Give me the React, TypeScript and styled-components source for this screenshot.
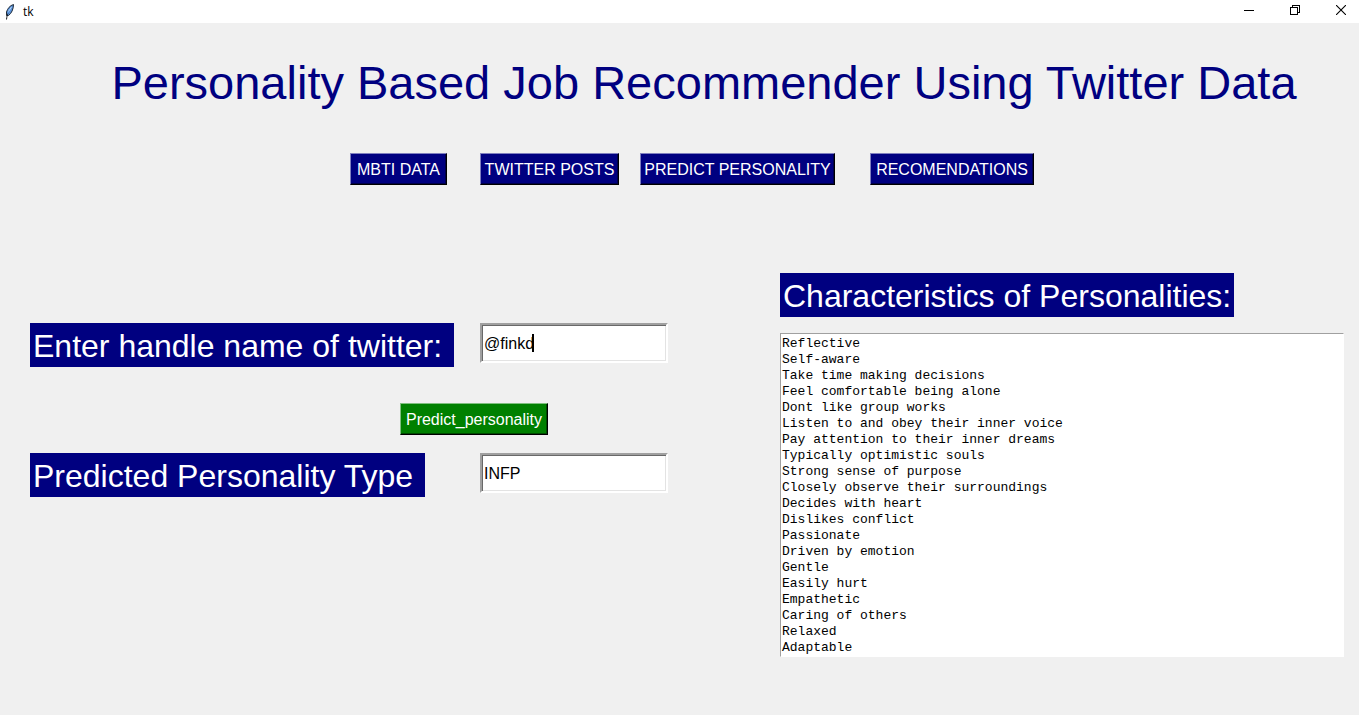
import React, { useState } from "react";
import styled, { createGlobalStyle } from "styled-components";

const GlobalStyle = createGlobalStyle`
  * { box-sizing: border-box; }
  body {
    margin: 0;
    background: #f0f0f0;
    font-family: "Liberation Sans", Arial, sans-serif;
  }
`;

const Window = styled.div`
  min-height: 100vh;
  background: #f0f0f0;
`;

const TitleBar = styled.header`
  display: flex;
  align-items: center;
  height: 23px;
  padding-left: 3px;
  background: #fff;
`;

const Caption = styled.span`
  flex: 1;
  padding-left: 6px;
  font: 12px/22px "Open Sans", sans-serif;
  color: #000;
`;

const WindowButton = styled.button`
  display: flex;
  align-items: center;
  justify-content: center;
  width: 46px;
  height: 20px;
  padding: 0;
  border: 0;
  background: transparent;
  &:last-child { margin-right: -5px; }
`;

const WindowControls = styled.div`
  display: flex;
  align-self: flex-start;
  overflow: hidden;
`;

const Heading = styled.h1`
  margin: 0;
  padding: 33px 0 0 49px;
  font-size: 47px;
  font-weight: 400;
  line-height: 54px;
  text-align: center;
  white-space: nowrap;
  color: #000080;
`;

const Nav = styled.nav`
  display: flex;
  padding: 43px 0 0 350px;
`;

const RaisedButton = styled.button<{ $width: number; $tone?: "navy" | "green"; $gap?: number }>`
  width: ${(p) => p.$width}px;
  height: 32px;
  margin: 0 ${(p) => p.$gap ?? 0}px 0 0;
  padding: 2px 0 0;
  border: 1px solid;
  border-color: ${(p) =>
    p.$tone === "green" ? "#7fbf7f #000 #000 #7fbf7f" : "#7f7fbf #000 #000 #7f7fbf"};
  box-shadow: inset -1px -1px ${(p) => (p.$tone === "green" ? "#004b00" : "#00004b")};
  background: ${(p) => (p.$tone === "green" ? "#008000" : "#000080")};
  color: #fff;
  font: 16px/18px "Liberation Sans", Arial, sans-serif;
  white-space: nowrap;
`;

const Content = styled.main`
  display: grid;
  grid-template-columns: 750px 1fr;
  padding: 88px 15px 0 30px;
`;

const Form = styled.form`
  display: grid;
  grid-template-columns: 450px 188px;
  align-content: start;
  align-items: start;
  padding-top: 50px;
`;

const Action = styled.div`
  grid-column: 1 / -1;
  padding: 36px 0 18px 370px;
`;

const bannerStyle = `
  justify-self: start;
  display: block;
  width: max-content;
  margin: 0;
  padding: 4px 3px 2px;
  background: #000080;
  color: #fff;
  font-size: 32px;
  font-weight: 400;
  line-height: 38px;
  white-space: pre;
`;

const FieldLabel = styled.label`${bannerStyle}`;
const PanelHeading = styled.label`${bannerStyle}`;

const Field = styled.div`
  position: relative;
  height: 40px;
`;

const TextBox = styled.input`
  display: block;
  width: 100%;
  height: 40px;
  padding: 2px 2px 0;
  border: 2px solid;
  border-color: #a0a0a0 #fff #fff #a0a0a0;
  border-radius: 0;
  box-shadow: inset 1px 1px #696969, inset -1px -1px #e3e3e3;
  outline: 0;
  background: #fff;
  color: #000;
  font: 16px/18px "Liberation Sans", Arial, sans-serif;
`;

const Caret = styled.span`
  position: absolute;
  top: 11px;
  left: 52px;
  width: 2px;
  height: 18px;
  background: #000;
`;

const Traits = styled.textarea`
  display: block;
  width: 100%;
  height: 324px;
  margin-top: 16px;
  padding: 2px 1px 0;
  border: 1px solid;
  border-color: #a0a0a0 #fff #fff #a0a0a0;
  border-radius: 0;
  outline: 0;
  overflow: hidden;
  resize: none;
  background: #fff;
  color: #000;
  font: 13px/16px "Liberation Mono", "Courier New", monospace;
`;

const traits = [
  "Reflective",
  "Self-aware",
  "Take time making decisions",
  "Feel comfortable being alone",
  "Dont like group works",
  "Listen to and obey their inner voice",
  "Pay attention to their inner dreams",
  "Typically optimistic souls",
  "Strong sense of purpose",
  "Closely observe their surroundings",
  "Decides with heart",
  "Dislikes conflict",
  "Passionate",
  "Driven by emotion",
  "Gentle",
  "Easily hurt",
  "Empathetic",
  "Caring of others",
  "Relaxed",
  "Adaptable",
];

const FeatherIcon = () => (
  <svg width="14" height="18" viewBox="0 0 14 18" aria-hidden="true">
    <path
      d="M10.5 1.5C7 2.5 4.500 5.500 3.500 9L3.500 12.500L5.500 12.500C8.500 10.500 10.500 6 10.500 1.500Z"
      fill="#5b94dc"
      stroke="#222c38"
      strokeWidth="1"
    />
    <path d="M5 10.500C4.200 12 3.800 14 3.500 16.500" fill="none" stroke="#15191e" strokeWidth="1" />
    <path d="M8.500 4L5.500 8.500" stroke="#b9d7f7" strokeWidth="1" />
  </svg>
);

export default function App() {
  const [handle, setHandle] = useState("@finkd");
  return (
    <Window>
      <GlobalStyle />
      <TitleBar>
        <FeatherIcon />
        <Caption>tk</Caption>
        <WindowControls>
          <WindowButton aria-label="Minimize">
            <svg width="10" height="10" shapeRendering="crispEdges">
              <path d="M0 5.500H10" stroke="#000" />
            </svg>
          </WindowButton>
          <WindowButton aria-label="Restore">
            <svg width="10" height="10" fill="none" stroke="#000" shapeRendering="crispEdges">
              <path d="M0.500 2.500H7.500V9.500H0.500ZM2.500 2.500V0.500H9.500V7.500H7.500" />
            </svg>
          </WindowButton>
          <WindowButton aria-label="Close">
            <svg width="10" height="10" fill="none" stroke="#000" strokeWidth="1.1">
              <path d="M0 0L10 10M10 0L0 10" />
            </svg>
          </WindowButton>
        </WindowControls>
      </TitleBar>
      <Heading>Personality Based Job Recommender Using Twitter Data</Heading>
      <Nav>
        <RaisedButton $width={97} $gap={33}>MBTI DATA</RaisedButton>
        <RaisedButton $width={139} $gap={21}>TWITTER POSTS</RaisedButton>
        <RaisedButton $width={195} $gap={35}>PREDICT PERSONALITY</RaisedButton>
        <RaisedButton $width={164}>RECOMENDATIONS</RaisedButton>
      </Nav>
      <Content>
        <Form onSubmit={(e) => e.preventDefault()}>
          <FieldLabel htmlFor="handle">{"Enter handle name of twitter: "}</FieldLabel>
          <Field>
            <TextBox id="handle" value={handle} onChange={(e) => setHandle(e.target.value)} />
            <Caret />
          </Field>
          <Action>
            <RaisedButton $width={148} $tone="green" type="submit">Predict_personality</RaisedButton>
          </Action>
          <FieldLabel htmlFor="type">{"Predicted Personality Type "}</FieldLabel>
          <Field>
            <TextBox id="type" defaultValue="INFP" />
          </Field>
        </Form>
        <section>
          <PanelHeading htmlFor="traits">Characteristics of Personalities:</PanelHeading>
          <Traits id="traits" spellCheck={false} defaultValue={traits.join("\n")} />
        </section>
      </Content>
    </Window>
  );
}
